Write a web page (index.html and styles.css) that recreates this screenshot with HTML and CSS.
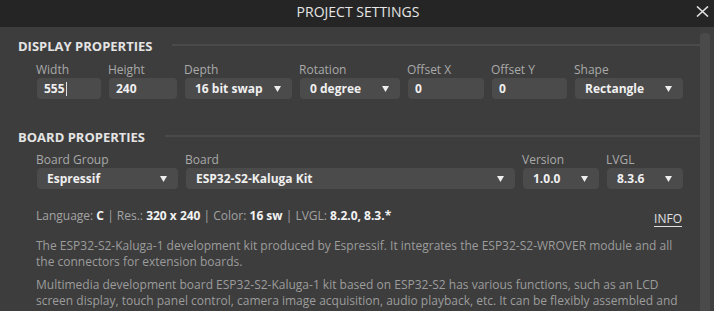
FILE: index.html
```html
<!DOCTYPE html>
<html>
<head>
<meta charset="utf-8">
<link rel="stylesheet" href="styles.css">
</head>
<body>
<div class="dialog">
  <header class="titlebar">
    <span></span>
    <h1 class="title">PROJECT SETTINGS</h1>
    <button class="close" aria-label="Close">
      <svg width="13" height="11" viewBox="0 0 13 11"><path d="M1 0.5 L12 10.5 M12 0.5 L1 10.5" stroke="#e0e0e0" stroke-width="1.6" fill="none"/></svg>
    </button>
  </header>
  <div class="body">
    <div class="content">
      <div class="section-head"><h2>DISPLAY PROPERTIES</h2><span class="rule"></span></div>
      <div class="row display-row">
        <label class="field"><span class="lbl">Width</span><span class="box input">555<span class="caret"></span></span></label>
        <label class="field"><span class="lbl">Height</span><span class="box input">240</span></label>
        <label class="field"><span class="lbl">Depth</span><span class="box select">16 bit swap<i class="arrow"></i></span></label>
        <label class="field"><span class="lbl">Rotation</span><span class="box select">0 degree<i class="arrow"></i></span></label>
        <label class="field"><span class="lbl">Offset X</span><span class="box input">0</span></label>
        <label class="field"><span class="lbl">Offset Y</span><span class="box input">0</span></label>
        <label class="field"><span class="lbl">Shape</span><span class="box select">Rectangle<i class="arrow"></i></span></label>
      </div>

      <div class="section-head board-head"><h2>BOARD PROPERTIES</h2><span class="rule"></span></div>
      <div class="row board-row">
        <label class="field"><span class="lbl">Board Group</span><span class="box select">Espressif<i class="arrow"></i></span></label>
        <label class="field"><span class="lbl">Board</span><span class="box select">ESP32-S2-Kaluga Kit<i class="arrow"></i></span></label>
        <label class="field"><span class="lbl">Version</span><span class="box select">1.0.0<i class="arrow"></i></span></label>
        <label class="field"><span class="lbl">LVGL</span><span class="box select">8.3.6<i class="arrow"></i></span></label>
      </div>

      <div class="info">
        <div class="meta">Language: <b>C</b> | Res.: <b>320 x 240</b> | Color: <b>16 sw</b> | LVGL: <b>8.2.0, 8.3.*</b></div>
        <a class="info-link">INFO</a>
      </div>
      <p class="desc">The ESP32-S2-Kaluga-1 development kit produced by Espressif. It integrates the ESP32-S2-WROVER module and all the connectors for extension boards.</p>
      <p class="desc">Multimedia development board ESP32-S2-Kaluga-1 kit based on ESP32-S2 has various functions, such as an LCD screen display, touch panel control, camera image acquisition, audio playback, etc. It can be flexibly assembled and disassembled, thus fulfilling a variety of customized requirements.</p>
    </div>
    <div class="scrollbar"><div class="thumb"></div></div>
  </div>
</div>
</body>
</html>
```

FILE: styles.css
```css
* { box-sizing: border-box; }
html, body {
  margin: 0;
  padding: 0;
  background: #3d3d3d;
  font-family: "Open Sans", "Noto Sans", sans-serif;
  overflow: hidden;
}
.dialog {
  width: 714px;
  height: 311px;
  display: flex;
  flex-direction: column;
  background: #3d3d3d;
  overflow: hidden;
}
.titlebar {
  height: 27px;
  flex: none;
  background: #252525;
  display: grid;
  grid-template-columns: 1fr auto 1fr;
  align-items: start;
}
.title {
  margin: 0;
  font-size: 14px;
  font-weight: 400;
  line-height: 23px;
  color: #e6e6e6;
  padding-left: 2px;
}
.close {
  justify-self: end;
  margin: 6px 5px 0 0;
  padding: 0;
  border: 0;
  background: none;
  width: 13px;
  height: 11px;
  display: flex;
}
.body {
  flex: 1;
  display: flex;
  min-height: 0;
}
.content {
  flex: 1;
  padding: 10px 0 0 18px;
  min-width: 0;
}
.scrollbar {
  width: 14px;
  flex: none;
  padding-top: 6px;
  background: #3f3f3f;
}
.thumb {
  width: 10px;
  height: 100%;
  background: #4a4a4a;
  border-radius: 4px 4px 0 0;
}
.section-head {
  display: flex;
  align-items: center;
  gap: 20px;
  height: 18px;
}
.section-head h2 {
  margin: 0;
  font-size: 13px;
  font-weight: 700;
  line-height: 18px;
  color: #e4e4e4;
  white-space: nowrap;
}
.rule {
  flex: 1;
  height: 2px;
  background: #4a4a4a;
  margin-top: -2px;
}
.board-head { margin-top: 29px; }
.row {
  display: grid;
  gap: 8px;
  margin: 7px 17px 0 19px;
}
.display-row {
  grid-template-columns: 64px 68px 107px 100px 76px 75px 108px;
}
.board-row {
  margin-top: 6px;
  grid-template-columns: 141px 1fr 76px 76px;
}
.field {
  display: flex;
  flex-direction: column;
  gap: 1px;
  min-width: 0;
}
.lbl {
  font-size: 12px;
  line-height: 15px;
  color: #a9a9a9;
  margin-left: -1px;
}
.box {
  position: relative;
  height: 21px;
  border-radius: 4px;
  background: #4b4b4b;
  font-size: 12px;
  font-weight: 700;
  line-height: 21px;
  color: #f0f0f0;
  padding-top: 1px;
  display: flex;
  align-items: flex-start;
  white-space: nowrap;
}
.box.input { padding-left: 7px; line-height: 20px; }
.box.select { padding-left: 10px; padding-right: 11px; justify-content: space-between; line-height: 20px; }
.caret {
  display: inline-block;
  width: 1px;
  height: 14px;
  background: #e0e0e0;
  margin-top: 3px;
  margin-left: 1px;
}
.arrow {
  width: 7px;
  height: 6px;
  margin-top: 7px;
  flex: none;
  background: #eeeeee;
  clip-path: polygon(0 0, 100% 0, 50% 100%);
}
.info {
  display: flex;
  justify-content: space-between;
  align-items: flex-start;
  margin: 19px 17px 0 18px;
  font-size: 12px;
  line-height: 16px;
  color: #a3a3a3;
}
.meta b { color: #f2f2f2; font-weight: 700; }
.info-link {
  color: #e0e0e0;
  border-bottom: 1px solid #e0e0e0;
  line-height: 15px;
  margin-top: 3px;
  margin-right: 1px;
}
.desc {
  margin: 0 17px 0 18px;
  font-size: 12px;
  line-height: 16px;
  color: #9c9c9c;
}
.info + .desc { margin-top: 11px; }
.desc + .desc { margin-top: 7px; }
```
